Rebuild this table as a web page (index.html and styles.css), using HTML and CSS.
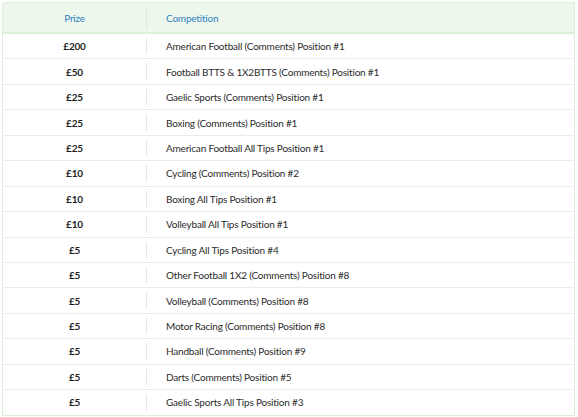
FILE: index.html
```html
<!DOCTYPE html>
<html>
<head>
<meta charset="utf-8">
<link rel="stylesheet" href="styles.css">
</head>
<body>
<div class="wrap">
<table class="prizes">
<thead>
<tr><th class="prize">Prize</th><th class="comp">Competition</th></tr>
</thead>
<tbody>
<tr><td class="prize">£200</td><td class="comp">American Football (Comments) Position #1</td></tr>
<tr><td class="prize">£50</td><td class="comp">Football BTTS &amp; 1X2BTTS (Comments) Position #1</td></tr>
<tr><td class="prize">£25</td><td class="comp">Gaelic Sports (Comments) Position #1</td></tr>
<tr><td class="prize">£25</td><td class="comp">Boxing (Comments) Position #1</td></tr>
<tr><td class="prize">£25</td><td class="comp">American Football All Tips Position #1</td></tr>
<tr><td class="prize">£10</td><td class="comp">Cycling (Comments) Position #2</td></tr>
<tr><td class="prize">£10</td><td class="comp">Boxing All Tips Position #1</td></tr>
<tr><td class="prize">£10</td><td class="comp">Volleyball All Tips Position #1</td></tr>
<tr><td class="prize">£5</td><td class="comp">Cycling All Tips Position #4</td></tr>
<tr><td class="prize">£5</td><td class="comp">Other Football 1X2 (Comments) Position #8</td></tr>
<tr><td class="prize">£5</td><td class="comp">Volleyball (Comments) Position #8</td></tr>
<tr><td class="prize">£5</td><td class="comp">Motor Racing (Comments) Position #8</td></tr>
<tr><td class="prize">£5</td><td class="comp">Handball (Comments) Position #9</td></tr>
<tr><td class="prize">£5</td><td class="comp">Darts (Comments) Position #5</td></tr>
<tr><td class="prize">£5</td><td class="comp">Gaelic Sports All Tips Position #3</td></tr>
</tbody>
</table>
</div>
</body>
</html>
```
FILE: styles.css
```css
html, body {
  margin: 0;
  padding: 0;
  background: #ffffff;
}
body {
  font-family: "Lato", "Open Sans", sans-serif;
  font-size: 10px;
  letter-spacing: -0.2px;
  color: #2b2b2b;
}
.wrap {
  padding: 2px 3px 0 2px;
}
.prizes {
  width: 573px;
  border-collapse: collapse;
  border: 1px solid #dcefd8;
  table-layout: fixed;
}
.prizes th,
.prizes td {
  padding: 0;
  vertical-align: middle;
}
.prizes thead th {
  height: 29px;
  background: #edf7ec;
  border-bottom: 2px solid #dcefd8;
  font-weight: normal;
  color: #2f82c2;
}
.prizes tbody td {
  height: 24.45px;
  border-top: 1px solid #ebebeb;
}
.prizes tbody tr:first-child td {
  border-top: none;
}
.prize {
  width: 143px;
  text-align: center;
}
td.prize {
  font-weight: bold;
  color: #1e1e1e;
}
.comp {
  position: relative;
  text-align: left;
  padding-left: 20px !important;
}
.comp::before {
  content: "";
  position: absolute;
  left: 0;
  top: 4px;
  bottom: 4px;
  width: 1px;
  background: #e6e6e6;
}
thead .comp::before {
  background: #dde8dc;
  top: 3px;
  bottom: 3px;
}
```
